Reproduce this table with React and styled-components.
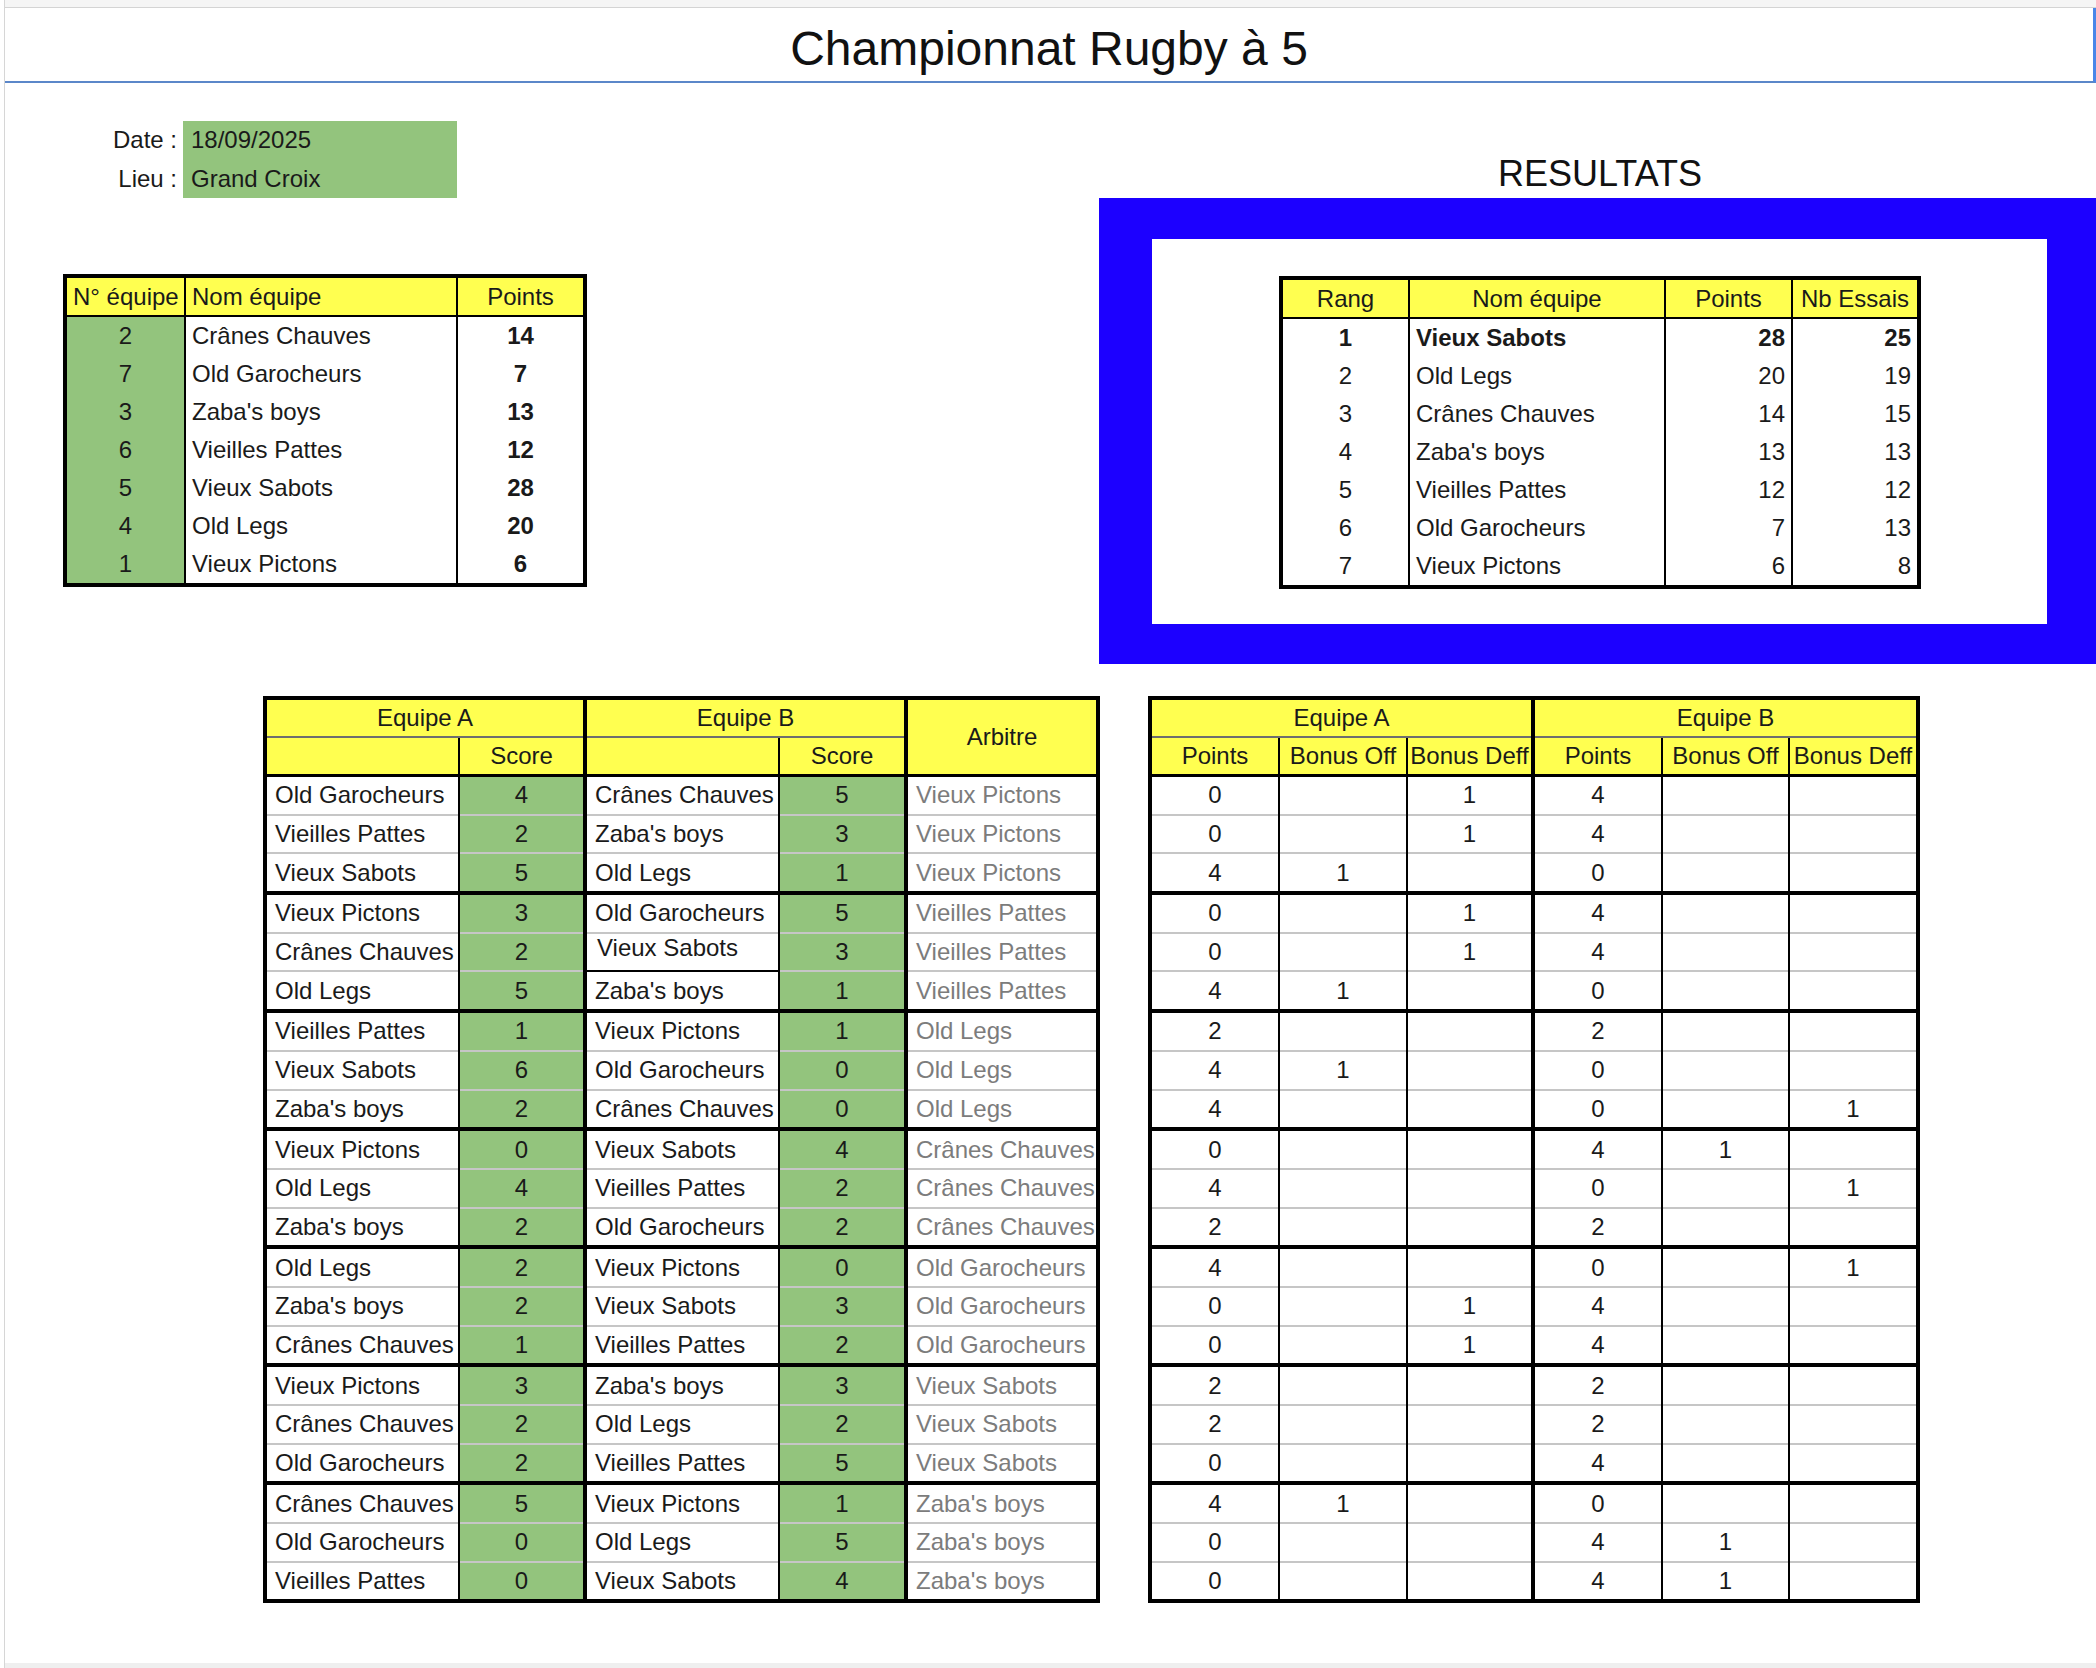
import React from "react";
import styled, { createGlobalStyle } from "styled-components";

const GlobalStyle = createGlobalStyle`
  html, body {
    margin: 0;
    padding: 0;
    background: #ffffff;
    overflow: hidden;
  }
  body {
    font-family: "Liberation Sans", Arial, sans-serif;
    color: #1a1a1a;
  }
`;

const YELLOW = "#ffff50";
const GREEN = "#93c47d";
const BLUE = "#1c00ff";

// données du tableau des équipes
const teams = [
  [2, "Crânes Chauves", 14],
  [7, "Old Garocheurs", 7],
  [3, "Zaba's boys", 13],
  [6, "Vieilles Pattes", 12],
  [5, "Vieux Sabots", 28],
  [4, "Old Legs", 20],
  [1, "Vieux Pictons", 6],
];

const ranking = [
  [1, "Vieux Sabots", 28, 25],
  [2, "Old Legs", 20, 19],
  [3, "Crânes Chauves", 14, 15],
  [4, "Zaba's boys", 13, 13],
  [5, "Vieilles Pattes", 12, 12],
  [6, "Old Garocheurs", 7, 13],
  [7, "Vieux Pictons", 6, 8],
];

// equipe A, score A, equipe B, score B, arbitre, [pts, bonus off, bonus deff] A, idem B
const matches = [
  ["Old Garocheurs", 4, "Crânes Chauves", 5, "Vieux Pictons", [0, "", 1], [4, "", ""]],
  ["Vieilles Pattes", 2, "Zaba's boys", 3, "Vieux Pictons", [0, "", 1], [4, "", ""]],
  ["Vieux Sabots", 5, "Old Legs", 1, "Vieux Pictons", [4, 1, ""], [0, "", ""]],
  ["Vieux Pictons", 3, "Old Garocheurs", 5, "Vieilles Pattes", [0, "", 1], [4, "", ""]],
  ["Crânes Chauves", 2, "Vieux Sabots", 3, "Vieilles Pattes", [0, "", 1], [4, "", ""]],
  ["Old Legs", 5, "Zaba's boys", 1, "Vieilles Pattes", [4, 1, ""], [0, "", ""]],
  ["Vieilles Pattes", 1, "Vieux Pictons", 1, "Old Legs", [2, "", ""], [2, "", ""]],
  ["Vieux Sabots", 6, "Old Garocheurs", 0, "Old Legs", [4, 1, ""], [0, "", ""]],
  ["Zaba's boys", 2, "Crânes Chauves", 0, "Old Legs", [4, "", ""], [0, "", 1]],
  ["Vieux Pictons", 0, "Vieux Sabots", 4, "Crânes Chauves", [0, "", ""], [4, 1, ""]],
  ["Old Legs", 4, "Vieilles Pattes", 2, "Crânes Chauves", [4, "", ""], [0, "", 1]],
  ["Zaba's boys", 2, "Old Garocheurs", 2, "Crânes Chauves", [2, "", ""], [2, "", ""]],
  ["Old Legs", 2, "Vieux Pictons", 0, "Old Garocheurs", [4, "", ""], [0, "", 1]],
  ["Zaba's boys", 2, "Vieux Sabots", 3, "Old Garocheurs", [0, "", 1], [4, "", ""]],
  ["Crânes Chauves", 1, "Vieilles Pattes", 2, "Old Garocheurs", [0, "", 1], [4, "", ""]],
  ["Vieux Pictons", 3, "Zaba's boys", 3, "Vieux Sabots", [2, "", ""], [2, "", ""]],
  ["Crânes Chauves", 2, "Old Legs", 2, "Vieux Sabots", [2, "", ""], [2, "", ""]],
  ["Old Garocheurs", 2, "Vieilles Pattes", 5, "Vieux Sabots", [0, "", ""], [4, "", ""]],
  ["Crânes Chauves", 5, "Vieux Pictons", 1, "Zaba's boys", [4, 1, ""], [0, "", ""]],
  ["Old Garocheurs", 0, "Old Legs", 5, "Zaba's boys", [0, "", ""], [4, 1, ""]],
  ["Vieilles Pattes", 0, "Vieux Sabots", 4, "Zaba's boys", [0, "", ""], [4, 1, ""]],
];

const App = () => {
  return (
    <>
      <GlobalStyle />
      <Page>
        <TopStrip />
        <TitleBar>Championnat Rugby à 5</TitleBar>

        <Upper>
          <LeftCol>
            <Info>
              <InfoLabel>Date :</InfoLabel>
              <InfoValue>18/09/2025</InfoValue>
              <InfoLabel>Lieu :</InfoLabel>
              <InfoValue>Grand Croix</InfoValue>
            </Info>

            <TeamTable $w={520}>
              <colgroup>
                <Col $w={120} />
                <Col $w={272} />
                <Col $w={128} />
              </colgroup>
              <thead>
                <tr>
                  <HeadCell $first>N° équipe</HeadCell>
                  <HeadCell $align="left">Nom équipe</HeadCell>
                  <HeadCell>Points</HeadCell>
                </tr>
              </thead>
              <tbody>
                {teams.map(([num, name, pts]) => (
                  <tr key={name}>
                    <Cell $first $bg={GREEN}>{num}</Cell>
                    <Cell $align="left">{name}</Cell>
                    <Cell $bold>{pts}</Cell>
                  </tr>
                ))}
              </tbody>
            </TeamTable>
          </LeftCol>

          <RightCol>
            <ResultsHeading>RESULTATS</ResultsHeading>
            <Frame>
              <FrameInner>
                <TeamTable $w={638}>
                  <colgroup>
                    <Col $w={128} />
                    <Col $w={256} />
                    <Col $w={127} />
                    <Col $w={127} />
                  </colgroup>
                  <thead>
                    <tr>
                      <HeadCell $first>Rang</HeadCell>
                      <HeadCell>Nom équipe</HeadCell>
                      <HeadCell>Points</HeadCell>
                      <HeadCell>Nb Essais</HeadCell>
                    </tr>
                  </thead>
                  <tbody>
                    {ranking.map(([rank, name, pts, tries]) => (
                      <tr key={name}>
                        <Cell $first $bold={rank === 1}>{rank}</Cell>
                        <Cell $align="left" $bold={rank === 1}>{name}</Cell>
                        <Cell $align="right" $bold={rank === 1}>{pts}</Cell>
                        <Cell $align="right" $bold={rank === 1}>{tries}</Cell>
                      </tr>
                    ))}
                  </tbody>
                </TeamTable>
              </FrameInner>
            </Frame>
          </RightCol>
        </Upper>

        <Lower>
          <MatchTable $w={833}>
            <colgroup>
              <Col $w={194} />
              <Col $w={126} />
              <Col $w={194} />
              <Col $w={127} />
              <Col $w={192} />
            </colgroup>
            <thead>
              <tr>
                <GroupHead colSpan={2} $left={0}>Equipe A</GroupHead>
                <GroupHead colSpan={2} $left={4}>Equipe B</GroupHead>
                <SubHead rowSpan={2} $left={4}>Arbitre</SubHead>
              </tr>
              <tr>
                <SubHead $left={0}></SubHead>
                <SubHead $left={2}>Score</SubHead>
                <SubHead $left={4}></SubHead>
                <SubHead $left={2}>Score</SubHead>
              </tr>
            </thead>
            <tbody>
              {matches.map((m, i) => {
                const groupStart = i % 3 === 0 && i > 0;
                return (
                  <tr key={i}>
                    <MatchCell $group={groupStart} $left={0} $align="left">{m[0]}</MatchCell>
                    <MatchCell $group={groupStart} $left={2} $bg={GREEN}>{m[1]}</MatchCell>
                    <MatchCell $group={groupStart} $left={4} $align="left" $odd={i === 4}>{m[2]}</MatchCell>
                    <MatchCell $group={groupStart} $left={2} $bg={GREEN}>{m[3]}</MatchCell>
                    <MatchCell $group={groupStart} $left={4} $align="left" $muted>{m[4]}</MatchCell>
                  </tr>
                );
              })}
            </tbody>
          </MatchTable>

          <MatchTable $w={768}>
            <colgroup>
              <Col $w={129} />
              <Col $w={128} />
              <Col $w={126} />
              <Col $w={129} />
              <Col $w={127} />
              <Col $w={129} />
            </colgroup>
            <thead>
              <tr>
                <GroupHead colSpan={3} $left={0}>Equipe A</GroupHead>
                <GroupHead colSpan={3} $left={4}>Equipe B</GroupHead>
              </tr>
              <tr>
                <SubHead $left={0}>Points</SubHead>
                <SubHead $left={2}>Bonus Off</SubHead>
                <SubHead $left={2}>Bonus Deff</SubHead>
                <SubHead $left={4}>Points</SubHead>
                <SubHead $left={2}>Bonus Off</SubHead>
                <SubHead $left={2}>Bonus Deff</SubHead>
              </tr>
            </thead>
            <tbody>
              {matches.map((m, i) => {
                const groupStart = i % 3 === 0 && i > 0;
                const cells = [...m[5], ...m[6]];
                return (
                  <tr key={i}>
                    {cells.map((v, j) => (
                      <MatchCell
                        key={j}
                        $group={groupStart}
                        $left={j === 0 ? 0 : j === 3 ? 4 : 2}
                      >
                        {v}
                      </MatchCell>
                    ))}
                  </tr>
                );
              })}
            </tbody>
          </MatchTable>
        </Lower>

        <Spacer />
        <BottomStrip />
      </Page>
    </>
  );
};

const Page = styled.div`
  width: 2091px;
  height: 1668px;
  margin-left: 4px;
  border-left: 1px solid #d6d6d6;
  display: flex;
  flex-direction: column;
  background: #fff;
  overflow: hidden;
`;

const TopStrip = styled.div`
  height: 7px;
  background: #f5f5f5;
  border-bottom: 1px solid #d4d4d4;
  flex-shrink: 0;
`;

const TitleBar = styled.div`
  height: 75px;
  box-sizing: border-box;
  padding-top: 7px;
  display: flex;
  align-items: center;
  justify-content: center;
  font-size: 48px;
  color: #111;
  border-bottom: 2px solid #5b87c9;
  border-right: 3px solid #4a86e8;
  flex-shrink: 0;
`;

const Upper = styled.div`
  display: grid;
  grid-template-columns: 1094px 997px;
  flex-shrink: 0;
`;

const LeftCol = styled.div`
  padding-left: 58px;
  padding-top: 38px;
`;

const Info = styled.div`
  display: grid;
  grid-template-columns: 120px 274px;
  grid-template-rows: 38.5px 38.5px;
  font-size: 24px;
  margin-bottom: 76px;
`;

const InfoLabel = styled.div`
  text-align: right;
  padding-right: 6px;
  line-height: 38.5px;
`;

const InfoValue = styled.div`
  background: ${GREEN};
  padding-left: 8px;
  line-height: 38.5px;
`;

const Col = styled.col`
  width: ${(p) => p.$w}px;
`;

const TeamTable = styled.table`
  width: ${(p) => p.$w}px;
  border-collapse: collapse;
  table-layout: fixed;
  border: 4px solid #000;
  font-size: 24px;
  color: #1a1a1a;
`;

const HeadCell = styled.th`
  background: ${YELLOW};
  font-weight: normal;
  height: 37px;
  padding: 0 6px;
  white-space: nowrap;
  overflow: hidden;
  text-align: ${(p) => p.$align || "center"};
  border-left: ${(p) => (p.$first ? "none" : "2px solid #000")};
  border-bottom: 2px solid #000;
`;

const Cell = styled.td`
  height: 38px;
  padding: 0 6px;
  white-space: nowrap;
  overflow: hidden;
  background: ${(p) => p.$bg || "#fff"};
  text-align: ${(p) => p.$align || "center"};
  font-weight: ${(p) => (p.$bold ? "bold" : "normal")};
  border-left: ${(p) => (p.$first ? "none" : "2px solid #000")};
`;

const RightCol = styled.div`
  display: flex;
  flex-direction: column;
`;

const ResultsHeading = styled.div`
  height: 115px;
  box-sizing: border-box;
  display: flex;
  align-items: flex-end;
  justify-content: center;
  padding: 0 0 6px 5px;
  font-size: 36px;
  line-height: 36px;
  color: #111;
`;

const Frame = styled.div`
  background: ${BLUE};
  padding: 41px 49px 40px 53px;
`;

const FrameInner = styled.div`
  background: #fff;
  height: 385px;
  box-sizing: border-box;
  padding: 37px 0 0 127px;
`;

const Lower = styled.div`
  display: flex;
  align-items: flex-start;
  gap: 48px;
  padding-left: 258px;
  margin-top: 32px;
  flex-shrink: 0;
`;

const MatchTable = styled.table`
  width: ${(p) => p.$w}px;
  border-collapse: collapse;
  table-layout: fixed;
  border: 4px solid #000;
  font-size: 24px;
  color: #1a1a1a;
`;

const GroupHead = styled.th`
  background: ${YELLOW};
  font-weight: normal;
  height: 36px;
  padding: 0;
  border-left: ${(p) => (p.$left ? `${p.$left}px solid #000` : "none")};
  border-bottom: 2px solid #6e6e6e;
`;

const SubHead = styled.th`
  background: ${YELLOW};
  font-weight: normal;
  height: 36px;
  padding: 0;
  white-space: nowrap;
  overflow: hidden;
  border-left: ${(p) => (p.$left ? `${p.$left}px solid #000` : "none")};
  border-bottom: 3px solid #000;
`;

const MatchCell = styled.td`
  height: 36.7px;
  padding: 0 ${(p) => (p.$odd ? "10px" : "8px")};
  white-space: nowrap;
  overflow: hidden;
  background: ${(p) => p.$bg || "#fff"};
  color: ${(p) => (p.$muted ? "#7c7c7c" : "#1a1a1a")};
  text-align: ${(p) => p.$align || "center"};
  vertical-align: ${(p) => (p.$odd ? "top" : "middle")};
  border-left: ${(p) => (p.$left ? `${p.$left}px solid #000` : "none")};
  border-top: ${(p) => (p.$group ? "4px solid #000" : "2px solid #c6c6c6")};
  ${(p) => p.$odd && "border-bottom: 2px solid #000;"}
`;

const Spacer = styled.div`
  flex: 1;
`;

const BottomStrip = styled.div`
  height: 5px;
  background: #efefef;
  flex-shrink: 0;
`;

export default App;
